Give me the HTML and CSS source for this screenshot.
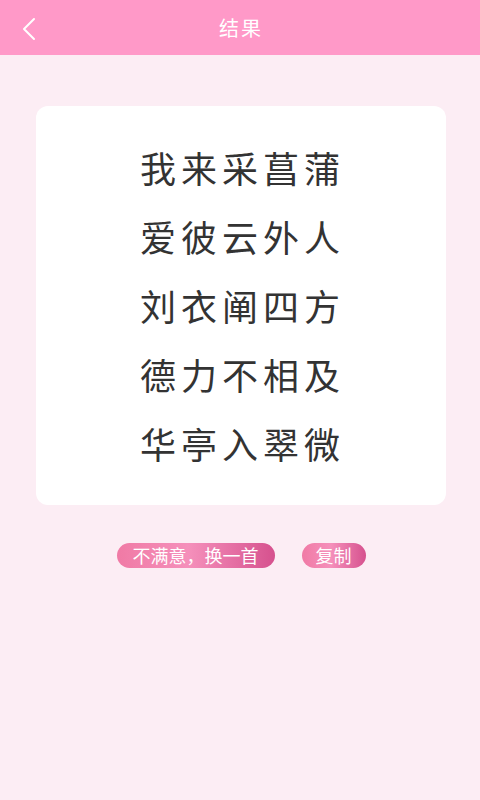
FILE: index.html
```html
<!DOCTYPE html>
<html lang="zh">
<head>
<meta charset="utf-8">
<link rel="stylesheet" href="styles.css">
</head>
<body>
<header class="bar">
  <svg class="back" width="16" height="24" viewBox="0 0 16 24"><path d="M13 2 L3 12 L13 22" fill="none" stroke="#fff" stroke-width="2" stroke-linecap="round" stroke-linejoin="round"/></svg>
  <div class="title">结果</div>
</header>
<main class="content">
  <section class="card">
    <p class="line">我来采菖蒲</p>
    <p class="line">爱彼云外人</p>
    <p class="line">刘衣阐四方</p>
    <p class="line">德力不相及</p>
    <p class="line">华亭入翠微</p>
  </section>
  <div class="actions">
    <button class="btn wide">不满意，换一首</button>
    <button class="btn short">复制</button>
  </div>
</main>
</body>
</html>
```
FILE: styles.css
```css
html, body { margin: 0; padding: 0; }
body {
  width: 480px;
  height: 800px;
  background: #fcedf4;
  font-family: "Noto Sans CJK SC", "Noto Sans", sans-serif;
  overflow: hidden;
}
.bar {
  height: 55px;
  background: #ff99c8;
  position: relative;
  display: flex;
  align-items: center;
  justify-content: center;
}
.back { position: absolute; left: 21px; top: 17px; }
.title { color: #fff; font-size: 20px; letter-spacing: 2px; padding-left: 2px; }
.content { padding: 51px 34px 0 36px; }
.card {
  background: #fff;
  border-radius: 12px;
  height: 399px;
  display: flex;
  flex-direction: column;
  align-items: center;
  padding-top: 37px;
  box-sizing: border-box;
}
.line {
  margin: 0;
  height: 69px;
  line-height: 48px;
  font-size: 36px;
  color: #333;
  letter-spacing: 5px;
  padding-left: 3px;
}
.actions {
  display: flex;
  justify-content: center;
  gap: 27px;
  margin-top: 38px;
}
.btn {
  border: none;
  height: 25px;
  padding: 0;
  border-radius: 13px;
  color: #fff;
  font-family: inherit;
  font-size: 18px;
  line-height: 25px;
  background: linear-gradient(90deg, #f07aa5 0%, #f590bb 45%, #d6518e 100%);
}
.wide { width: 158px; }
.short { width: 64px; }
```
